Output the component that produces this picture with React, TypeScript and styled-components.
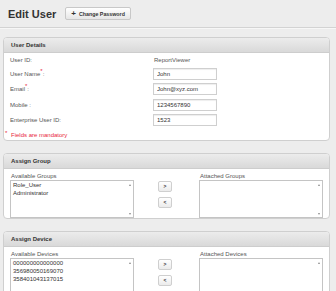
import styled, { createGlobalStyle } from "styled-components";

const GlobalStyle = createGlobalStyle`
  body {
    margin: 0;
    background: #ededed;
    font-family: "Liberation Sans", Arial, sans-serif;
    color: #444;
  }
`;

const Page = styled.div`
  width: 336px;
  padding: 0 6px 0 3px;
  box-sizing: border-box;
`;

const TitleBar = styled.div`
  display: flex;
  align-items: center;
  gap: 9px;
  height: 28px;
  margin: 0 -6px 0 -3px;
  padding: 0 0 0 8px;
  box-sizing: border-box;
  border-bottom: 1px solid #d3d3d3;
  box-shadow: 0 1px 0 #f7f7f7;
`;

const Title = styled.h1`
  margin: 0;
  font-size: 11px;
  font-weight: bold;
  color: #333;
`;

const ChangeButton = styled.button`
  display: flex;
  align-items: center;
  gap: 3px;
  height: 13px;
  padding: 0 5px;
  border: 1px solid #c8c8c8;
  border-radius: 2px;
  background: linear-gradient(#ffffff, #e6e6e6);
  font-family: inherit;
  font-size: 5.3px;
  font-weight: bold;
  color: #333;

  b {
    font-size: 8px;
    line-height: 1;
  }
`;

const Panel = styled.section<{ $top: number }>`
  margin-top: ${({ $top }) => $top}px;
  background: #fff;
  border: 1px solid #cfcfcf;
  border-radius: 4px;
  overflow: hidden;
`;

const PanelHeader = styled.div`
  height: 14px;
  display: flex;
  align-items: center;
  padding-left: 7px;
  background: linear-gradient(#ececec, #d9d9d9);
  border-bottom: 1px solid #cdcdcd;
  font-size: 6px;
  font-weight: bold;
  color: #333;
`;

const DetailsGrid = styled.div`
  display: grid;
  grid-template-columns: 143px 64px;
  row-gap: 3.5px;
  align-items: center;
  padding: 3px 0 1px 6px;
  font-size: 6px;
`;

const Label = styled.span`
  color: #555;
  line-height: 8px;

  sup {
    color: #e8283c;
    font-size: 6px;
    line-height: 0;
  }
`;

const Value = styled.span`
  color: #555;
  line-height: 8px;
  padding-left: 1px;
`;

const Field = styled.input`
  width: 64px;
  height: 12px;
  box-sizing: border-box;
  border: 1px solid #cfcfcf;
  box-shadow: inset 0 1px 1px #eee;
  padding: 0 3px;
  font-family: inherit;
  font-size: 6px;
  color: #333;
  outline: none;
`;

const Mandatory = styled.div`
  display: flex;
  align-items: flex-start;
  padding: 4px 0 1px 0;
  font-size: 6px;
  line-height: 8px;
  color: #e8283c;
`;

const Star = styled.span`
  width: 6px;
  padding-left: 1px;
  font-size: 6px;
  line-height: 5px;
`;

const Transfer = styled.div`
  display: flex;
  padding: 3px 0 0 6px;
`;

const Column = styled.div`
  display: flex;
  flex-direction: column;
  width: 124px;
`;

const ListLabel = styled.div`
  font-size: 6px;
  line-height: 8px;
  color: #555;
  padding-left: 1px;
`;

const ListBox = styled.div<{ $height: number }>`
  display: flex;
  height: ${({ $height }) => $height}px;
  border: 1px solid #c4c4c4;
  box-sizing: border-box;
  background: #fff;
`;

const Items = styled.div`
  flex: 1;
  padding: 1px 2px;
  font-size: 6px;
  line-height: 7.8px;
  color: #333;
`;

const Track = styled.div`
  width: 7px;
  display: flex;
  flex-direction: column;
  justify-content: space-between;
  align-items: center;
  padding: 3px 0 2px;
`;

const Arrow = styled.span<{ $down?: boolean }>`
  width: 0;
  height: 0;
  border-left: 1.5px solid transparent;
  border-right: 1.5px solid transparent;
  ${({ $down }) =>
    $down ? "border-top: 2px solid #8a8a8a;" : "border-bottom: 2px solid #8a8a8a;"}
`;

const Moves = styled.div`
  display: flex;
  flex-direction: column;
  gap: 5px;
  padding-top: 9px;
  margin: 0 27px 0 24px;
`;

const MoveButton = styled.button`
  width: 14px;
  height: 11px;
  padding: 0;
  border: 1px solid #cfcfcf;
  border-radius: 2px;
  background: linear-gradient(#ffffff, #ebebeb);
  font-family: inherit;
  font-size: 5px;
  font-weight: bold;
  color: #333;
  line-height: 1;
`;

type ListProps = { label: string; items: string[]; height: number };

const List = ({ label, items, height }: ListProps) => (
  <Column>
    <ListLabel>{label}</ListLabel>
    <ListBox $height={height}>
      <Items>
        {items.map((it) => (
          <div key={it}>{it}</div>
        ))}
      </Items>
      <Track>
        <Arrow />
        <Arrow $down />
      </Track>
    </ListBox>
  </Column>
);

const Assign = ({
  title,
  left,
  right,
  items,
  top,
  height,
}: {
  title: string;
  left: string;
  right: string;
  items: string[];
  top: number;
  height: number;
}) => (
  <Panel $top={top}>
    <PanelHeader>{title}</PanelHeader>
    <Transfer>
      <List label={left} items={items} height={height} />
      <Moves>
        <MoveButton>&gt;</MoveButton>
        <MoveButton>&lt;</MoveButton>
      </Moves>
      <List label={right} items={[]} height={height} />
    </Transfer>
  </Panel>
);

const App: React.FC = () => {
  return (
    <>
      <GlobalStyle />
      <Page>
        <TitleBar>
          <Title>Edit User</Title>
          <ChangeButton>
            <b>+</b>
            Change Password
          </ChangeButton>
        </TitleBar>

        <Panel $top={9}>
          <PanelHeader>User Details</PanelHeader>
          <DetailsGrid>
            <Label>User ID:</Label>
            <Value>ReportViewer</Value>
            <Label>
              User Name<sup>*</sup>:
            </Label>
            <Field defaultValue="John" />
            <Label>
              Email<sup>*</sup>:
            </Label>
            <Field defaultValue="John@xyz.com" />
            <Label>Mobile :</Label>
            <Field defaultValue="1234567890" />
            <Label>Enterprise User ID:</Label>
            <Field defaultValue="1523" />
          </DetailsGrid>
          <Mandatory>
            <Star>*</Star>
            Fields are mandatory
          </Mandatory>
        </Panel>

        <Assign
          top={12}
          title="Assign Group"
          left="Available Groups"
          right="Attached Groups"
          items={["Role_User", "Administrator"]}
          height={38}
        />

        <Assign
          top={12}
          title="Assign Device"
          left="Available Devices"
          right="Attached Devices"
          items={["000000000000000", "356980050169070", "358401043137015"]}
          height={38}
        />
      </Page>
    </>
  );
};

export default App;
